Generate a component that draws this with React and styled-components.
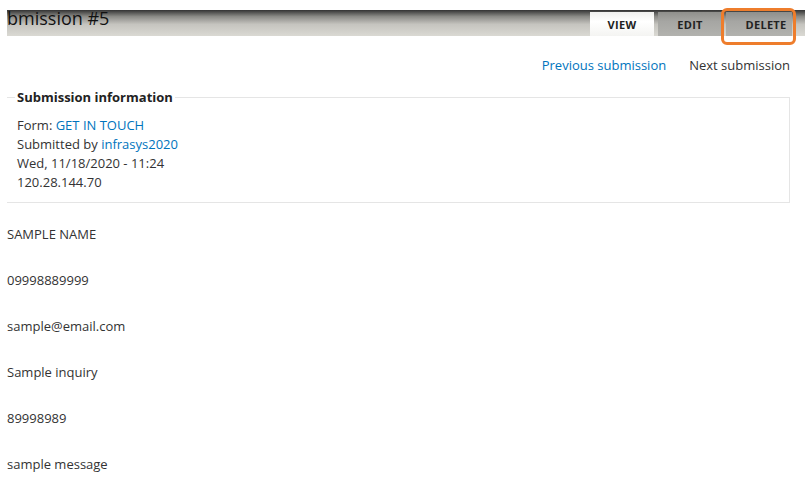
import styled, { createGlobalStyle } from "styled-components";

const GlobalStyle = createGlobalStyle`
  html, body {
    margin: 0;
    padding: 0;
    background: #fff;
  }
  body {
    font-family: "Open Sans", "Noto Sans", sans-serif;
    font-size: 13px;
    color: #333;
  }
`;

const Page = styled.div`
  width: 810px;
  height: 498px;
  overflow: hidden;
  padding: 10px 0 0 7px;
  box-sizing: border-box;
`;

const HeaderBar = styled.div`
  display: flex;
  align-items: stretch;
  justify-content: space-between;
  height: 26px;
  margin-right: 5px;
  background: linear-gradient(#333 0%, #8a8a86 25%, #c5c4bf 55%, #dad9d3 100%);
`;

const Title = styled.h1`
  margin: 0;
  font-size: 18px;
  font-weight: normal;
  line-height: 17px;
  color: #111;
`;

const Tabs = styled.ul`
  display: flex;
  align-items: flex-end;
  gap: 4px;
  margin: 0;
  padding: 0 13px 0 0;
  list-style: none;
`;

const Tab = styled.li`
  position: relative;
  display: flex;
  align-items: center;
  justify-content: center;
  box-sizing: border-box;
  width: ${(p) => p.$width}px;
  height: 24px;
  padding-left: ${(p) => p.$shift || 0}px;
  font-size: 11px;
  font-weight: bold;
  letter-spacing: 0.3px;
  color: #222;
  background: ${(p) =>
    p.$active
      ? "linear-gradient(#f0f0ee, #fff 40%, #f4f4f2)"
      : "linear-gradient(#8f8f8c, #a6a6a3 40%, #b2b2ae)"};
`;

const Highlight = styled.span`
  position: absolute;
  left: -5px;
  top: -4px;
  right: -4px;
  bottom: -9px;
  border: 3px solid #ee7d2c;
  border-radius: 6px;
`;

const Pager = styled.nav`
  display: flex;
  justify-content: flex-end;
  gap: 23px;
  padding: 20px 20px 0 0;
  height: 18px;
  line-height: 18px;
`;

const Link = styled.a`
  color: #0074bd;
  text-decoration: none;
`;

const Plain = styled.span`
  color: #333;
`;

const Fieldset = styled.fieldset`
  margin: 14px 20px 0 0;
  padding: 10px 10px 10px 10px;
  border: 1px solid #e5e5e5;
  border-left: none;
`;

const Legend = styled.legend`
  padding: 0 2px;
  margin-left: -2px;
  font-weight: bold;
  color: #222;
`;

const InfoLine = styled.div`
  line-height: 19px;
`;

const Values = styled.div`
  display: flex;
  flex-direction: column;
  gap: 28px;
  padding-top: 22px;
`;

const Value = styled.div`
  line-height: 18px;
`;

const tabs = [
  { label: "VIEW", width: 64, active: true },
  { label: "EDIT", width: 64 },
  { label: "DELETE", width: 66, shift: 14, highlight: true },
];

const values = [
  "SAMPLE NAME",
  "09998889999",
  "sample@email.com",
  "Sample inquiry",
  "89998989",
  "sample message",
];

export default function App() {
  return (
    <>
      <GlobalStyle />
      <Page>
        <HeaderBar>
          <Title>bmission #5</Title>
          <Tabs>
            {tabs.map((t) => (
              <Tab
                key={t.label}
                $width={t.width}
                $active={t.active}
                $shift={t.shift}
              >
                {t.label}
                {t.highlight && <Highlight />}
              </Tab>
            ))}
          </Tabs>
        </HeaderBar>
        <Pager>
          <Link href="#">Previous submission</Link>
          <Plain>Next submission</Plain>
        </Pager>
        <Fieldset>
          <Legend>Submission information</Legend>
          <InfoLine>
            Form: <Link href="#">GET IN TOUCH</Link>
          </InfoLine>
          <InfoLine>
            Submitted by <Link href="#">infrasys2020</Link>
          </InfoLine>
          <InfoLine>Wed, 11/18/2020 - 11:24</InfoLine>
          <InfoLine>120.28.144.70</InfoLine>
        </Fieldset>
        <Values>
          {values.map((v) => (
            <Value key={v}>{v}</Value>
          ))}
        </Values>
      </Page>
    </>
  );
}
